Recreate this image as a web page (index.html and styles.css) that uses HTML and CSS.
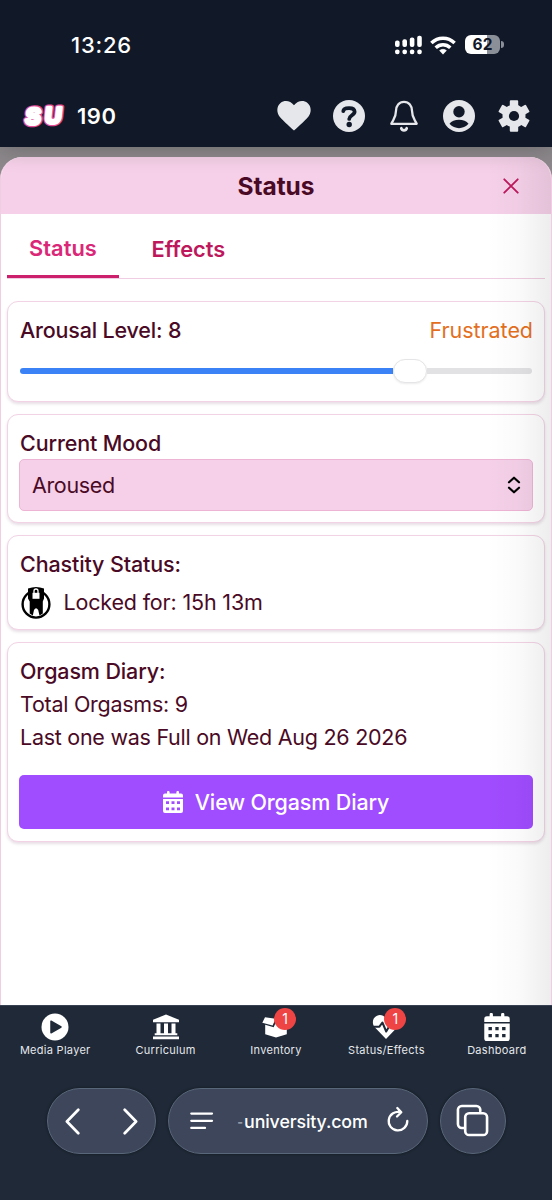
FILE: index.html
```html
<!DOCTYPE html>
<html lang="en">
<head>
<meta charset="utf-8">
<title>Status</title>
<link rel="stylesheet" href="styles.css">
</head>
<body>
<div class="screen">
  <header class="top">
    <div class="statusbar">
      <span class="clock">13:26</span>
      <div class="indicators">
        <svg class="signal" width="28" height="20" viewBox="0 0 28 20" fill="#fff">
          <rect x="0" y="5.5" width="4.6" height="6.6" rx="2"/><rect x="7.4" y="4.2" width="4.6" height="7.9" rx="2"/><rect x="14.8" y="2.6" width="4.6" height="9.5" rx="2"/><rect x="22.2" y=".8" width="4.6" height="11.3" rx="2"/>
          <rect x="0" y="14.4" width="4.6" height="4.8" rx="2.2"/><rect x="7.4" y="14.4" width="4.6" height="4.8" rx="2.2"/><rect x="14.8" y="14.4" width="4.6" height="4.8" rx="2.2"/><rect x="22.2" y="14.4" width="4.6" height="4.8" rx="2.2"/>
        </svg>
        <svg class="wifi" width="26" height="20" viewBox="0 0 26 20" fill="none" stroke="#fff" stroke-width="3.5">
          <path d="M1.4 8.1C8 1.500 18 1.500 24.600 8.100"/><path d="M5.700 12.700C9.900 8.700 16.100 8.700 20.300 12.700"/><path d="M13 19.200l-3.400-3.600c2-1.700 4.800-1.700 6.800 0z" fill="#fff" stroke="#fff" stroke-width=".6"/>
        </svg>
        <div class="battery"><span class="battery-body">62</span><span class="battery-tip"></span></div>
      </div>
    </div>
    <div class="appbar">
      <div class="brand">
        <svg class="logo" width="46" height="30" viewBox="0 0 46 30">
          <g class="logo-text" transform="translate(2.200 0) skewX(-6)"><g class="logo-edge"><text x="5.200" y="22.600">S</text><text x="24.600" y="21.800">U</text></g><g class="logo-fill"><text x="5.200" y="22.600">S</text><text x="24.600" y="21.800">U</text></g></g>
        </svg>
        <span class="points">190</span>
      </div>
      <nav class="actions">
        <svg viewBox="0 0 34 34"><path fill="#e5e7eb" d="M17 31.500C15.500 30 6.500 22.500 2.500 17.500C-.8 13-.2 7 3.500 4C7.500 .800 13.300 1.500 17 6.300C20.700 1.500 26.500 .800 30.500 4C34.200 7 34.800 13 31.500 17.500C27.500 22.500 18.500 30 17 31.500Z"/></svg>
        <svg viewBox="0 0 34 34"><circle cx="17" cy="17" r="16" fill="#e5e7eb"/><path d="M11.300 12.200c.3-3.600 10.900-4.600 11.300.4c.2 3.400-5.400 3.800-5.400 7.300" fill="none" stroke="#111827" stroke-width="3.800" stroke-linecap="round" stroke-linejoin="round"/><circle cx="17.200" cy="25.500" r="2.700" fill="#111827"/></svg>
        <svg viewBox="0 0 34 34" fill="none" stroke="#e5e7eb" stroke-width="2.300" stroke-linejoin="round" stroke-linecap="round"><path d="M17 2.800c-5 0-8 4-8 9c0 7-2.500 8.500-4.700 13h25.400C27.500 20.300 25 18.800 25 11.800c0-5-3-9-8-9Z"/><path d="M14.300 29.300c.8 2.600 4.600 2.600 5.400 0" stroke-width="2.800"/></svg>
        <svg viewBox="0 0 34 34"><circle cx="17" cy="17" r="16" fill="#e5e7eb"/><circle cx="17" cy="12.800" r="5.700" fill="#111827"/><path d="M7.500 24.800c3.500-5.400 15.500-5.400 19 0c-5.200 5.800-13.800 5.800-19 0Z" fill="#111827"/></svg>
        <svg viewBox="0 0 34 34"><g fill="#e5e7eb" stroke="#e5e7eb" stroke-width="2" stroke-linejoin="round"><path d="M13.800 2.200h6.400v29.600h-6.400Z"/><path d="M2.600 12.400l3.200-5.600l25.600 14.800l-3.200 5.600Z"/><path d="M28.200 6.800l3.200 5.600L5.800 27.200l-3.200-5.600Z"/><circle cx="17" cy="17" r="10.500"/></g><circle cx="17" cy="17" r="5.100" fill="#111827"/></svg>
      </nav>
    </div>
  </header>

  <main class="backdrop">
    <section class="sheet">
      <div class="sheet-head">
        <h1>Status</h1>
        <svg class="close" width="16" height="16" viewBox="0 0 16 16"><path d="M1.300 1.300l13.400 13.400M14.700 1.300L1.300 14.700" fill="none" stroke="#be185d" stroke-width="1.900" stroke-linecap="round"/></svg>
      </div>
      <div class="sheet-body">
        <div class="tabs"><span class="tab active">Status</span><span class="tab">Effects</span></div>

        <article class="card arousal">
          <div class="row"><span class="label level">Arousal Level: 8</span><span class="state">Frustrated</span></div>
          <div class="slider"><div class="fill"></div><div class="thumb"></div><div class="rest"></div></div>
        </article>

        <article class="card mood">
          <div class="label mood-label">Current Mood</div>
          <div class="select"><span>Aroused</span>
            <svg width="14" height="18" viewBox="0 0 14 18" fill="none" stroke="#000" stroke-width="2.200" stroke-linecap="round" stroke-linejoin="round"><path d="M2 6.300L7 1.700L12 6.300M2 11.700L7 16.300L12 11.700"/></svg>
          </div>
        </article>

        <article class="card chastity">
          <div class="label chastity-label">Chastity Status:</div>
          <div class="locked">
            <svg width="30" height="34" viewBox="0 0 30 34"><circle cx="15" cy="18.200" r="13.400" fill="#fff" stroke="#000" stroke-width="2.400"/><path d="M7 2.500Q15-.5 23 2.500V12.500L21.800 15.500V27.500L18.500 29.500L17.200 24Q15 20.500 13 24L11.800 29.500L8.700 27.500V15.500L7 12.500Z"/><path d="M11.500 6.800h7v6h-7Z" fill="#fff"/><path d="M13 7V5a2 2 0 014 0v2" fill="none" stroke="#fff" stroke-width="1.300"/></svg>
            <span>Locked for: 15h 13m</span>
          </div>
        </article>

        <article class="card diary">
          <div class="label diary-label">Orgasm Diary:</div>
          <div class="total">Total Orgasms: 9</div>
          <div class="last">Last one was Full on Wed Aug 26 2026</div>
          <button class="view">
            <svg width="20" height="22" viewBox="0 0 20 22"><path fill="#fff" d="M0 4.500Q0 2.500 2 2.500H4V1.200a1.200 1.200 0 012.600 0V2.500H13.400V1.200a1.200 1.200 0 012.600 0V2.500H18Q20 2.500 20 4.500V6.500H0Z"/><path fill="#fff" fill-rule="evenodd" d="M0 8H20V20Q20 22 18 22H2Q0 22 0 20ZM3 10.300V13H6V10.300ZM8.500 10.300V13H11.500V10.300ZM14 10.300V13H17V10.300ZM3 16.400V19.200H6V16.400ZM8.500 16.400V19.200H11.500V16.400ZM14 16.400V19.200H17V16.400Z"/></svg>
            <span>View Orgasm Diary</span>
          </button>
        </article>
      </div>
    </section>
  </main>

  <footer class="bottom">
    <nav class="dock">
      <div class="item"><div class="ico"><svg width="28" height="28" viewBox="0 0 28 28"><circle cx="14" cy="14" r="13.500" fill="#fff"/><path d="M10 8.200V19.800L20 14Z" fill="#1f2937" stroke="#1f2937" stroke-width="1.500" stroke-linejoin="round"/></svg></div><span>Media Player</span></div>
      <div class="item"><div class="ico"><svg width="28" height="28" viewBox="0 0 28 28" fill="#fff"><path d="M14 1.600L27 6.700V9.300H1V6.700ZM4.500 10.500h4v10h-4ZM12 10.500h4v10h-4ZM19.500 10.500h4v10h-4ZM2.700 20.300h22.600v2H2.700ZM1 23.400h26v2.800H1Z"/></svg></div><span>Curriculum</span></div>
      <div class="item"><div class="ico"><svg width="28" height="28" viewBox="0 0 28 28" fill="#fff"><path d="M3 4.200L13.600 5.700L10.600 12.500L.3 9.700ZM25 4.200L14.400 5.700L17.400 12.500L27.700 9.700ZM3.200 11.800L11.700 14.200L14 9L16.300 14.200L24.800 11.800V21.300L14 24.600L3.200 21.300Z"/></svg><b class="badge">1</b></div><span>Inventory</span></div>
      <div class="item"><div class="ico"><svg width="28" height="28" viewBox="0 0 28 28"><path d="M14 26L2.500 14C-.5 10 .8 4.500 5 2.700C8.500 1.300 12 2.500 14 5.500C16 2.500 19.500 1.300 23 2.700C27.200 4.500 28.500 10 25.500 14Z" fill="#fff"/><path d="M.5 13.700H7.400L10.400 9.500L14.200 18.500L18 12L19.300 13.700H27.500" stroke="#1f2937" stroke-width="2" fill="none" stroke-linejoin="round"/></svg><b class="badge">1</b></div><span>Status/Effects</span></div>
      <div class="item"><div class="ico"><svg width="26" height="28" viewBox="0 0 20 22"><path fill="#fff" d="M0 4.500Q0 2.500 2 2.500H4.200V1.200a1.200 1.200 0 012.600 0V2.500H13.200V1.200a1.200 1.200 0 012.600 0V2.500H18Q20 2.500 20 4.500V7H0Z"/><path fill="#fff" fill-rule="evenodd" d="M0 8.200H20V20Q20 22 18 22H2Q0 22 0 20ZM3.300 11V13.500H6V11ZM8.700 11V13.500H11.300V11ZM14 11V13.500H16.700V11ZM3.300 16.500V19H6V16.500ZM8.700 16.500V19H11.300V16.500ZM14 16.500V19H16.700V16.500Z"/></svg></div><span>Dashboard</span></div>
    </nav>
    <div class="browser">
      <div class="pill history">
        <svg width="15" height="27" viewBox="0 0 15 27"><path d="M13.300 1.700L1.900 13.500L13.300 25.300"/></svg>
        <svg width="15" height="27" viewBox="0 0 15 27"><path d="M1.700 1.700L13.100 13.500L1.700 25.300"/></svg>
      </div>
      <div class="pill address">
        <svg class="reader" width="24" height="18" viewBox="0 0 24 18"><path d="M1.300 1.600H22M1.300 8.800H22M1.300 15.900H15"/></svg>
        <span class="url"><i>-</i>university.com</span>
        <svg class="reload" width="24" height="28" viewBox="0 0 24 28"><path d="M14.500 6.200A9.300 9.300 0 1021.300 15M11.300 2L15.300 6.300L11 10.500"/></svg>
      </div>
      <div class="pill pages"><svg width="33" height="33" viewBox="0 0 34 34"><path d="M8 24.700H6a4 4 0 01-4-4V6A4 4 0 016 2H21a4 4 0 014 4V7.500"/><rect x="9.500" y="9.500" width="22.500" height="22.500" rx="4"/></svg></div>
    </div>
  </footer>
</div>
</body>
</html>
```
FILE: styles.css
```css
* { box-sizing: border-box; }
body { margin: 0; font-family: Inter, "Liberation Sans", sans-serif; color: #4a0a25; }
svg { display: block; flex: none; }
.screen { width: 552px; height: 1200px; display: flex; flex-direction: column; overflow: hidden; background: #1f2937; }

.top { height: 147px; background: #111827; color: #fff; position: relative; z-index: 1; box-shadow: 0 3px 22px rgba(0,0,0,.2); flex: none; }
.statusbar { height: 89px; display: flex; justify-content: space-between; padding: 0 48px 0 71px; align-items: center; }
.clock { font-size: 22px; font-weight: 500; letter-spacing: .8px; }
.indicators { display: flex; align-items: center; }
.wifi { margin: 0 9px 0 7.500px; }
.battery { display: flex; align-items: center; gap: 1px; }
.battery-body { width: 35px; height: 19px; border-radius: 6px; background: linear-gradient(90deg, #fff 62%, #8b8f98 62%); color: #111827; font-size: 15.500px; font-weight: 700; line-height: 19px; text-align: center; }
.battery-tip { width: 3px; height: 7px; background: #8b8f98; border-radius: 0 3px 3px 0; }
.appbar { height: 54px; display: flex; align-items: center; justify-content: space-between; padding: 0 21px 0 20px; }
.brand { display: flex; align-items: center; gap: 11px; }
.logo-text { font: bold 22.500px "Liberation Sans", Arial, sans-serif; stroke-linejoin: round; }
.logo-edge { stroke: #e34d98; stroke-width: 6.200px; fill: #e34d98; }
.logo-fill { stroke: #fff; stroke-width: 3.600px; fill: #fff; }
.points { font-size: 22px; font-weight: 600; letter-spacing: .5px; }
.actions { display: flex; gap: 21px; }
.actions svg { width: 34px; height: 34px; position: relative; top: -.5px; }

.backdrop { height: 858px; background: #8c888b; padding-top: 10px; flex: none; }
.sheet { height: 848px; background: #fff; border: 1px solid #f0cde2; border-width: 0 1px; border-radius: 22px 22px 0 0; overflow: hidden; position: relative; }
.sheet::after { content: ""; position: absolute; inset: 0 0 0 auto; width: 64px; background: linear-gradient(90deg, transparent, rgba(0,0,0,.018) 50%, rgba(0,0,0,.07)); }
.sheet-head { height: 57px; background: #f5d0e8; display: flex; align-items: center; justify-content: center; position: relative; }
h1 { margin: 0; font-size: 24.500px; line-height: 30px; font-weight: 700; letter-spacing: -.05px; }
.close { position: absolute; right: 32px; top: 20.500px; }
.sheet-body { padding: 0 6px; display: flex; flex-direction: column; }
.tabs { height: 65px; border-bottom: 1.500px solid #f0cde2; display: flex; margin-bottom: 22px; }
.tab { height: 65px; padding: 0 22px; font-size: 21.800px; font-weight: 600; line-height: 71px; color: #be185d; margin-left: 10.500px; letter-spacing: 0; }
.tab.active { height: 64px; margin-left: 0; width: 112px; border-bottom: 3px solid #cc206d; line-height: 68px; color: #db2777; letter-spacing: .05px; }
.card { border: 1.500px solid #f2d3e5; border-radius: 11px; padding: 11px; box-shadow: 0 2px 3px rgba(80,10,60,.13); font-size: 21.500px; line-height: 33px; margin-bottom: 12px; background: #fff; }
.label { font-weight: 500; padding-left: 1px; letter-spacing: -.13px; position: relative; top: .5px; }
.level { letter-spacing: -.18px; }
.arousal { height: 101px; }
.row { display: flex; justify-content: space-between; }
.state { color: #e36f1e; position: relative; top: .5px; letter-spacing: -.05px; }
.slider { height: 24px; margin: 13px 1px 0; display: flex; align-items: center; }
.fill { width: 373px; height: 6px; background: #3b82f6; border-radius: 3px 0 0 3px; }
.thumb { width: 34px; height: 24px; border-radius: 12px; background: #fff; border: 1px solid #e5e5e7; box-shadow: 0 1px 2px rgba(0,0,0,.08); }
.rest { flex: 1; height: 6px; background: #e2e2e5; border-radius: 0 3px 3px 0; }
.mood { height: 109px; }
.select { height: 52px; border: 1.500px solid #eeb4d4; background: #f5d0e8; border-radius: 5px; display: flex; align-items: center; justify-content: space-between; padding: 0 11px 0 12px; letter-spacing: -.35px; }
.chastity { height: 95px; }
.locked { display: flex; align-items: flex-start; gap: 13px; padding-left: 1.500px; letter-spacing: -.17px; }
.locked svg { margin-top: 6px; }
.locked span { margin-top: 6px; }
.diary { height: 200px; }
.total, .last { padding-left: 1px; letter-spacing: -.27px; position: relative; top: .5px; }
.view { width: 100%; height: 54px; padding: 0; margin-top: 22px; border: 0; border-radius: 5px; background: #a04cff; color: #fff; font: 500 21.500px Inter, sans-serif; letter-spacing: -.15px; display: flex; align-items: center; justify-content: center; gap: 12px; }

.bottom { flex: 1; background: #1f2937; color: #fff; border-top: 1px solid #374151; }
.dock { height: 54px; display: grid; grid-template-columns: repeat(5, 1fr); }
.item { display: flex; flex-direction: column; align-items: center; padding-top: 7px; font-size: 11px; line-height: 15px; letter-spacing: .28px; color: #e5e7eb; }
.ico { height: 29.500px; position: relative; }
.badge { position: absolute; left: 12px; top: -5px; width: 22px; height: 22px; border-radius: 50%; background: #ef4444; color: #fff; font-size: 14px; line-height: 22px; font-weight: 400; text-align: center; letter-spacing: 0; }
.browser { display: flex; gap: 12px; padding: 28px 46px 0 47px; }
.pill { height: 66px; border-radius: 33px; background: #3d465a; border: 1px solid #59677a; box-shadow: 0 0 3px rgba(0,0,0,.45); display: flex; align-items: center; }
.pill svg { fill: none; stroke: #fff; stroke-width: 2.700; stroke-linecap: round; stroke-linejoin: round; }
.history { width: 109px; justify-content: space-between; padding: 0 17px; }
.address { width: 260px; padding: 0 17px 0 21px; }
.address .reader { stroke-width: 2.300; }
.address .reload { stroke-width: 2.300; position: relative; top: -1.500px; }
.url { font-size: 17.800px; font-weight: 500; letter-spacing: -.12px; margin-left: 22px; flex: 1; white-space: nowrap; }
.url i { font-style: normal; color: #9299a7; display: inline-block; transform: scaleX(.7); }
.pages { width: 66px; justify-content: center; }
.pages svg { position: relative; left: -.5px; top: -.5px; }
```
